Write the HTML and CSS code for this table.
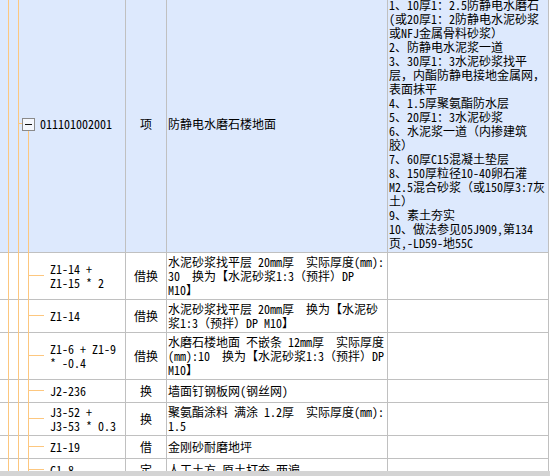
FILE: index.html
```html
<!DOCTYPE html>
<html lang="zh-CN">
<head>
<meta charset="utf-8">
<title>清单</title>
<link rel="stylesheet" href="styles.css">
</head>
<body>
<div class="view">
  <div class="viewport">
    <div class="grid">
      <div class="row parent">
        <div class="c code root"><span class="toggle"></span><span class="t">011101002001</span></div>
        <div class="c kind"><span class="t">项</span></div>
        <div class="c name"><span class="t">防静电水磨石楼地面</span></div>
        <div class="c desc"><span class="t">1、10厚1：2.5防静电水磨石<br>(或20厚1：2防静电水泥砂浆<br>或NFJ金属骨料砂浆）<br>2、防静电水泥浆一道<br>3、30厚1：3水泥砂浆找平<br>层，内酯防静电接地金属网，<br>表面抹平<br>4、1.5厚聚氨酯防水层<br>5、20厚1：3水泥砂浆<br>6、水泥浆一道（内掺建筑<br>胶）<br>7、60厚C15混凝土垫层<br>8、150厚粒径10-40卵石灌<br>M2.5混合砂浆（或150厚3:7灰<br>土）<br>9、素土夯实<br>10、做法参见05J909,第134<br>页,-LD59-地55C</span></div>
      </div>
      <div class="row">
        <div class="c code child"><span class="t">Z1-14 +<br>Z1-15 * 2</span></div>
        <div class="c kind"><span class="t">借换</span></div>
        <div class="c name"><span class="t">水泥砂浆找平层 20mm厚  实际厚度(mm):<br>30  换为【水泥砂浆1:3（预拌）DP<br>M10】</span></div>
        <div class="c desc"></div>
      </div>
      <div class="row">
        <div class="c code child"><span class="t">Z1-14</span></div>
        <div class="c kind"><span class="t">借换</span></div>
        <div class="c name"><span class="t">水泥砂浆找平层 20mm厚  换为【水泥砂<br>浆1:3（预拌）DP M10】</span></div>
        <div class="c desc"></div>
      </div>
      <div class="row">
        <div class="c code child"><span class="t">Z1-6 + Z1-9<br>* -0.4</span></div>
        <div class="c kind"><span class="t">借换</span></div>
        <div class="c name"><span class="t">水磨石楼地面 不嵌条 12mm厚  实际厚度<br>(mm):10  换为【水泥砂浆1:3（预拌）DP<br>M10】</span></div>
        <div class="c desc"></div>
      </div>
      <div class="row">
        <div class="c code child"><span class="t">J2-236</span></div>
        <div class="c kind"><span class="t">换</span></div>
        <div class="c name"><span class="t">墙面钉钢板网(钢丝网)</span></div>
        <div class="c desc"></div>
      </div>
      <div class="row">
        <div class="c code child"><span class="t">J3-52 +<br>J3-53 * 0.3</span></div>
        <div class="c kind"><span class="t">换</span></div>
        <div class="c name"><span class="t">聚氨酯涂料 满涂 1.2厚  实际厚度(mm):<br>1.5</span></div>
        <div class="c desc"></div>
      </div>
      <div class="row">
        <div class="c code child"><span class="t">Z1-19</span></div>
        <div class="c kind"><span class="t">借</span></div>
        <div class="c name"><span class="t">金刚砂耐磨地坪</span></div>
        <div class="c desc"></div>
      </div>
      <div class="row">
        <div class="c code child"><span class="t">C1-8</span></div>
        <div class="c kind"><span class="t">定</span></div>
        <div class="c name"><span class="t">人工土方 原土打夯 两遍</span></div>
        <div class="c desc"></div>
      </div>
    </div>
  </div>
  <div class="hbar"></div>
</div>
</body>
</html>
```

FILE: styles.css
```css
* { box-sizing: border-box; }
html, body { margin: 0; padding: 0; background: #fff; }
body {
  font-family: "Noto Sans Mono CJK SC", "Noto Sans CJK SC", monospace;
  font-size: 12px;
  line-height: 14px;
  color: #000;
}
.view {
  width: 550px;
  height: 476px;
  display: flex;
  flex-direction: column;
  overflow: hidden;
}
.viewport {
  flex: none;
  height: 471px;
  overflow: hidden;
}
.hbar {
  flex: 1;
  background: #d4d4d4;
}
.grid {
  width: 549px;
  margin-top: -4px;
}
.row {
  display: grid;
  grid-template-columns: 126px 41px 221px 161px;
}
.row.parent { background: #dde9fd; }
.c {
  display: flex;
  align-items: center;
  min-height: 23px;
  padding: 2px 0;
  border-right: 1px solid #c0c0c0;
  border-bottom: 1px solid #c0c0c0;
  overflow: hidden;
}
.t { display: block; white-space: pre; }
.kind { justify-content: center; }
.name, .desc { padding-left: 1px; }
.code {
  --tree: #fdc77f;
  --grid: #c0c0c0;
  border-bottom: 0;
  padding-bottom: 3px;
}
.code.child {
  padding-left: 50px;
  background:
    linear-gradient(var(--tree), var(--tree)) 8px 0 / 1px 100% no-repeat,
    linear-gradient(var(--tree), var(--tree)) 18px 0 / 1px 100% no-repeat,
    linear-gradient(var(--tree), var(--tree)) 28px 0 / 1px 100% no-repeat,
    linear-gradient(var(--tree), var(--tree)) 28px calc(50% - 1px) / 16px 1px no-repeat,
    linear-gradient(var(--grid), var(--grid)) 0 100% / 100% 1px no-repeat;
}
.code.root {
  padding-left: 22px;
  background:
    linear-gradient(var(--tree), var(--tree)) 8px 0 / 1px 100% no-repeat,
    linear-gradient(var(--tree), var(--tree)) 18px 0 / 1px 100% no-repeat,
    linear-gradient(var(--tree), var(--tree)) 18px calc(50% - 1px) / 5px 1px no-repeat,
    linear-gradient(to bottom, transparent 50%, var(--tree) 50%) 28px 0 / 1px 100% no-repeat,
    linear-gradient(var(--grid), var(--grid)) 0 100% / 100% 1px no-repeat;
}
.toggle {
  flex: none;
  width: 13px;
  height: 13px;
  margin-right: 5px;
  border: 1px solid #8a8a8a;
  background: linear-gradient(#111, #111) center / 7px 1px no-repeat, #f4f7fd;
}
```
